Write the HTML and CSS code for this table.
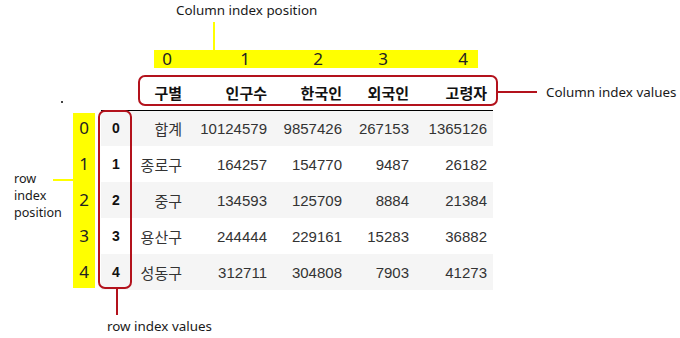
FILE: index.html
```html
<!DOCTYPE html>
<html lang="ko">
<head>
<meta charset="utf-8">
<title>DataFrame index</title>
<link rel="stylesheet" href="styles.css">
</head>
<body>
<div class="canvas">
  <table class="df">
    <thead>
      <tr>
        <th class="c-idx"></th>
        <th class="c-gu">구별</th>
        <th class="c-pop">인구수</th>
        <th class="c-kor">한국인</th>
        <th class="c-for">외국인</th>
        <th class="c-old">고령자</th>
      </tr>
    </thead>
    <tbody>
      <tr><th>0</th><td>합계</td><td>10124579</td><td>9857426</td><td>267153</td><td>1365126</td></tr>
      <tr><th>1</th><td>종로구</td><td>164257</td><td>154770</td><td>9487</td><td>26182</td></tr>
      <tr><th>2</th><td>중구</td><td>134593</td><td>125709</td><td>8884</td><td>21384</td></tr>
      <tr><th>3</th><td>용산구</td><td>244444</td><td>229161</td><td>15283</td><td>36882</td></tr>
      <tr><th>4</th><td>성동구</td><td>312711</td><td>304808</td><td>7903</td><td>41273</td></tr>
    </tbody>
  </table>

  <div class="note note-colpos">Column index position</div>
  <div class="yl-v"></div>
  <div class="col-pos">
    <span>0</span><span>1</span><span>2</span><span>3</span><span>4</span>
  </div>

  <div class="box box-head"></div>
  <div class="rd-h"></div>
  <div class="note note-colval">Column index values</div>

  <div class="dot"></div>

  <div class="note note-rowpos">row<br>index<br>position</div>
  <div class="yl-h"></div>
  <div class="row-pos">
    <span>0</span><span>1</span><span>2</span><span>3</span><span>4</span>
  </div>

  <div class="box box-rows"></div>
  <div class="rd-v"></div>
  <div class="note note-rowval">row index values</div>
</div>
</body>
</html>
```

FILE: styles.css
```css
html, body {
  margin: 0;
  padding: 0;
  background: #fff;
}

.canvas {
  position: relative;
  width: 680px;
  height: 338px;
  overflow: hidden;
  font-family: "Noto Sans", "Liberation Sans", sans-serif;
  color: #222;
}

/* ---------- DataFrame table ---------- */
.df {
  width: 392px;
  border-collapse: collapse;
  border-spacing: 0;
  margin: 75px 0 0 101px;
  table-layout: fixed;
  font-family: "Liberation Sans", Arial, "Noto Sans CJK KR", sans-serif;
  font-size: 15px;
  color: #333;
}

.df th,
.df td {
  box-sizing: border-box;
}

.df thead th {
  height: 35px;
  padding: 0 6px 0 0;
  text-align: right;
  vertical-align: middle;
  font-family: "Noto Sans CJK KR", sans-serif;
  font-weight: 700;
  font-size: 15px;
  color: #111;
  border-bottom: 1px solid #000;
}

.c-idx { width: 30px; }
.c-gu { width: 57px; }
.c-pop { width: 85px; }
.c-kor { width: 75px; }
.c-for { width: 67px; }
.c-old { width: 78px; }

.df tbody tr {
  height: 36px;
}

.df tbody tr:nth-child(odd) {
  background: #f5f5f5;
}

.df tbody th {
  padding: 0;
  text-align: center;
  font-weight: 700;
  font-size: 14px;
  color: #111;
}

.df tbody td {
  padding: 0 6px 0 0;
  text-align: right;
  vertical-align: middle;
}

.df tbody td:first-of-type {
  font-family: "Noto Sans CJK KR", sans-serif;
  color: #333;
}

/* ---------- annotations (overlays) ---------- */
.note {
  position: absolute;
  font-size: 13.4px;
  line-height: 18px;
  color: #1a1a1a;
  white-space: nowrap;
}

.note-colpos { left: 176px; top: 1px; }
.note-colval { left: 546px; top: 83px; }
.note-rowpos {
  left: 14px;
  top: 170px;
  font-size: 12.6px;
  line-height: 17px;
}
.note-rowval { left: 107px; top: 317px; }

.yl-v {
  position: absolute;
  left: 213px;
  top: 22px;
  width: 2px;
  height: 28px;
  background: #ffff00;
}

.yl-h {
  position: absolute;
  left: 53px;
  top: 179px;
  width: 20px;
  height: 2px;
  background: #ffff00;
}

.col-pos {
  position: absolute;
  left: 154px;
  top: 50px;
  width: 324px;
  height: 18px;
  background: #ffff00;
  display: flex;
  align-items: center;
  font-size: 17px;
  line-height: 18px;
  color: #222;
}

.col-pos span {
  width: 10px;
  text-align: center;
}

.col-pos span:nth-child(1) { margin-left: 8px; }
.col-pos span:nth-child(2) { margin-left: 68px; }
.col-pos span:nth-child(3) { margin-left: 63px; }
.col-pos span:nth-child(4) { margin-left: 55px; }
.col-pos span:nth-child(5) { margin-left: 70px; }

.row-pos {
  position: absolute;
  left: 73px;
  top: 113px;
  width: 22px;
  height: 175px;
  background: #ffff00;
  display: flex;
  flex-direction: column;
  align-items: center;
  font-size: 17px;
  color: #222;
}

.row-pos span {
  height: 36px;
  line-height: 36px;
}

.row-pos span:first-child {
  margin-top: -3px;
}

.box {
  position: absolute;
  border: 2px solid #b3121c;
  border-radius: 7px;
  box-sizing: border-box;
}

.box-head {
  left: 138px;
  top: 75px;
  width: 360px;
  height: 31px;
}

.box-rows {
  left: 98px;
  top: 110px;
  width: 34px;
  height: 179px;
}

.rd-h {
  position: absolute;
  left: 498px;
  top: 91px;
  width: 39px;
  height: 2px;
  background: #b3121c;
}

.rd-v {
  position: absolute;
  left: 116px;
  top: 289px;
  width: 2px;
  height: 26px;
  background: #b3121c;
}

.dot {
  position: absolute;
  left: 61px;
  top: 101px;
  width: 2px;
  height: 2px;
  background: #444;
}
```
